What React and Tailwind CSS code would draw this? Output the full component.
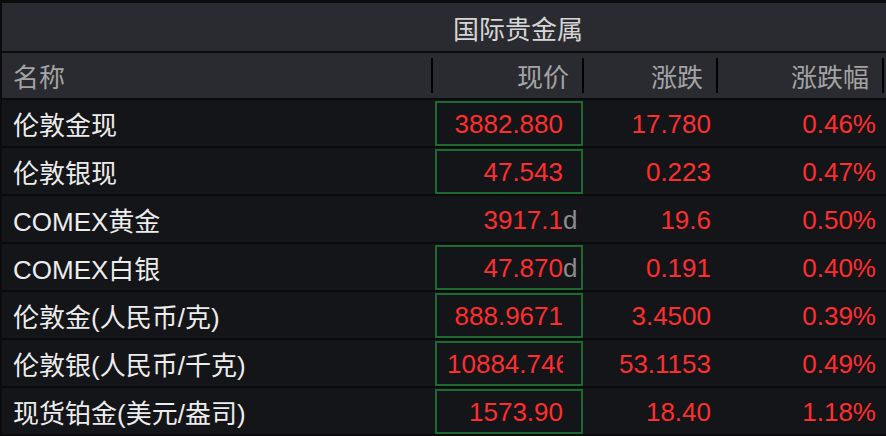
import React from "react";

const rows = [
  { name: "伦敦金现", price: "3882.880", change: "17.780", pct: "0.46%", box: true },
  { name: "伦敦银现", price: "47.543", change: "0.223", pct: "0.47%", box: true },
  { name: "COMEX黄金", price: "3917.1", suffix: "d", change: "19.6", pct: "0.50%", box: false },
  { name: "COMEX白银", price: "47.870", suffix: "d", change: "0.191", pct: "0.40%", box: true },
  { name: "伦敦金(人民币/克)", price: "888.9671", change: "3.4500", pct: "0.39%", box: true },
  { name: "伦敦银(人民币/千克)", price: "10884.746", change: "53.1153", pct: "0.49%", box: true },
  { name: "现货铂金(美元/盎司)", price: "1573.90", change: "18.40", pct: "1.18%", box: true },
];

const cjk = { fontFamily: '"Noto Sans CJK SC", "Liberation Sans", sans-serif' };
const mixed = { fontFamily: '"Liberation Sans", "Noto Sans CJK SC", sans-serif' };
const num = { fontFamily: '"Liberation Sans", Arial, sans-serif' };

function HeadCell({ children, className }) {
  return (
    <div className={"flex items-center justify-end h-full " + className}>
      <span className="pr-[13px]">{children}</span>
      <div className="w-[2px] h-[35px] bg-black shrink-0" />
    </div>
  );
}

export default function App() {
  return (
    <div className="w-[886px] h-[436px] overflow-hidden bg-[#0b0b0d] pt-[3px] pl-[2px]" style={cjk}>
      <div className="h-[48px] bg-[#2a2b30] flex items-center pl-[451px] text-[26px] text-[#d6d6d6]">
        国际贵金属
      </div>
      <div className="mt-[2px] h-[45px] bg-[#2a2b30] flex items-center text-[26px] text-[#a3a3a3]">
        <div className="w-[431px] h-full flex items-center justify-between pl-[11px]">
          <span>名称</span>
          <div className="w-[2px] h-[35px] bg-black" />
        </div>
        <HeadCell className="w-[151px]">现价</HeadCell>
        <HeadCell className="w-[134px]">涨跌</HeadCell>
        <HeadCell className="w-[166px]">涨跌幅</HeadCell>
        <div className="flex-1 h-full" />
      </div>
      <div className="mt-[2px] flex flex-col">
        {rows.map((r) => (
          <div key={r.name} className="h-[48px] border-b-2 border-[#0b0b0d] bg-[#141518] flex items-center text-[26px]">
            <div className="w-[431px] pl-[11px] pt-[6px] text-[#ececec] whitespace-nowrap" style={mixed}>
              {r.name}
            </div>
            <div className="w-[151px] h-full flex items-center pl-[2px] pr-px">
              <div
                className={
                  "w-full h-[45px] border-2 flex items-center pt-[3px] " +
                  (r.box ? "border-[#1d6a31]" : "border-transparent")
                }
                style={num}
              >
                <div className="flex-1 ml-[10px] overflow-hidden whitespace-nowrap text-right text-[#ff2e2e]">
                  {r.price}
                </div>
                <div className="w-[18px] text-[#8c8c8c]">{r.suffix}</div>
              </div>
            </div>
            <div className="w-[134px] text-right pr-[7px] pt-[3px] text-[#ff2e2e]" style={num}>
              {r.change}
            </div>
            <div className="w-[166px] text-right pr-[8px] pt-[3px] text-[#ff2e2e]" style={num}>
              {r.pct}
            </div>
          </div>
        ))}
      </div>
    </div>
  );
}
